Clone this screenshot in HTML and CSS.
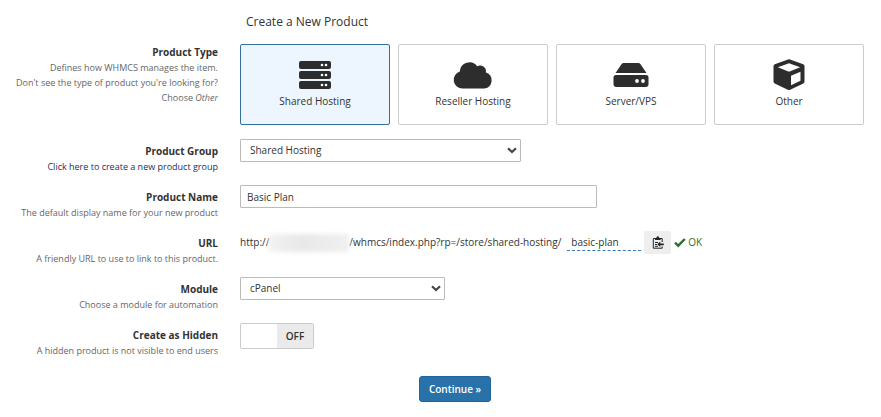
FILE: index.html
```html
<!DOCTYPE html>
<html lang="en">
<head>
<meta charset="utf-8">
<title>Create a New Product</title>
<link rel="stylesheet" href="styles.css">
</head>
<body>
<form class="product-form">
  <h1 class="title">Create a New Product</h1>

  <div class="row row-types">
    <div class="label">
      <strong id="type-label">Product Type</strong>
      <p>Defines how WHMCS manages the item.<br>Don't see the type of product you're looking for?<br>Choose <em>Other</em></p>
    </div>
    <div class="types" role="group" aria-labelledby="type-label">
      <button type="button" class="type selected" aria-pressed="true">
        <svg viewBox="0 0 36 30" aria-hidden="true">
          <rect x="2" y="1" width="32" height="8" rx="2"/><rect x="2" y="11" width="32" height="8" rx="2"/><rect x="2" y="21" width="32" height="8" rx="2"/>
          <g class="lights"><circle cx="25" cy="5" r="1.300"/><circle cx="29" cy="5" r="1.300"/><circle cx="25" cy="15" r="1.300"/><circle cx="29" cy="15" r="1.300"/><circle cx="25" cy="25" r="1.300"/><circle cx="29" cy="25" r="1.300"/></g>
        </svg>
        <span>Shared Hosting</span>
      </button>
      <button type="button" class="type" aria-pressed="false">
        <svg viewBox="0 0 40 30" class="wide" aria-hidden="true">
          <path d="M9.500 28.500a8.700 8.700 0 0 1-2.700-17A9.600 9.600 0 0 1 24.200 6.300a5.900 5.900 0 0 1 8.700 6.100A8.300 8.300 0 0 1 31.500 28.500z"/>
        </svg>
        <span>Reseller Hosting</span>
      </button>
      <button type="button" class="type" aria-pressed="false">
        <svg viewBox="0 0 36 30" aria-hidden="true">
          <path d="M2.500 13 8.500 4.200Q9.300 3 10.700 3H25.300Q26.700 3 27.500 4.200L33.500 13Z"/>
          <path d="M3 15H33Q35.500 15 35.500 17.500V24Q35.500 27 32.500 27H3.500Q.5 27 .5 24V17.500Q.5 15 3 15Z"/>
          <g class="lights"><circle cx="24" cy="21" r="1.900"/><circle cx="30" cy="21" r="1.900"/></g>
        </svg>
        <span>Server/VPS</span>
      </button>
      <button type="button" class="type" aria-pressed="false">
        <svg viewBox="0 0 36 30" aria-hidden="true">
          <path fill-rule="evenodd" d="M17 -.6Q18 -1 19 -.6L32.200 4.300Q33.500 4.800 33.500 6.200V21.500Q33.500 22.800 32.300 23.400L19.200 29.800Q18 30.300 16.800 29.800L3.700 23.400Q2.500 22.800 2.500 21.500V6.200Q2.500 4.800 3.800 4.300ZM18 3.200 6.800 7.300 18 11.800 29.200 7.300ZM20 15.700V25.300L29.500 20.700V11.800Z"/>
        </svg>
        <span>Other</span>
      </button>
    </div>
  </div>

  <div class="row">
    <div class="label">
      <label for="group">Product Group</label>
      <p><a href="#new-group">Click here to create a new product group</a></p>
    </div>
    <div class="field">
      <span class="select group-select">
        <select id="group"><option>Shared Hosting</option></select>
        <svg viewBox="0 0 10 7" aria-hidden="true"><path d="M1 1.300 5 5 9 1.300"/></svg>
      </span>
    </div>
  </div>

  <div class="row">
    <div class="label">
      <label for="name">Product Name</label>
      <p>The default display name for your new product</p>
    </div>
    <div class="field"><input class="name-input" id="name" type="text" value="Basic Plan"></div>
  </div>

  <div class="row">
    <div class="label">
      <label for="slug">URL</label>
      <p>A friendly URL to use to link to this product.</p>
    </div>
    <div class="field url">
      <span>http://</span><span class="redacted"></span><span>/whmcs/index.php?rp=/store/shared-hosting/</span>
      <input class="slug" id="slug" type="text" value="basic-plan">
      <button type="button" class="copy" aria-label="Copy URL">
        <svg viewBox="0 0 12 13" aria-hidden="true">
          <path class="line" d="M10.200 6V2.500H1.300V12.200H10.200V10.500M3 6.500H6M3 8.500H5M3 10.300H6"/>
          <path d="M3 4V2H4.300Q4.500.3 5.800.3T7.300 2H8.600V4ZM5.300 8.300 8.300 5.500V7.500H11.800V9.200H8.300V11Z"/>
        </svg>
      </button>
      <span class="ok"><svg viewBox="0 0 12 10" aria-hidden="true"><path d="M1 4.700 4.200 7.700 10.800 1"/></svg>OK</span>
    </div>
  </div>

  <div class="row">
    <div class="label">
      <label for="module">Module</label>
      <p>Choose a module for automation</p>
    </div>
    <div class="field">
      <span class="select module-select">
        <select id="module"><option>cPanel</option></select>
        <svg viewBox="0 0 10 7" aria-hidden="true"><path d="M1 1.300 5 5 9 1.300"/></svg>
      </span>
    </div>
  </div>

  <div class="row">
    <div class="label">
      <label for="hidden">Create as Hidden</label>
      <p>A hidden product is not visible to end users</p>
    </div>
    <div class="field">
      <button type="button" class="toggle" id="hidden" role="switch" aria-checked="false"><span>OFF</span></button>
    </div>
  </div>

  <div class="actions"><button type="submit" class="continue">Continue »</button></div>
</form>
</body>
</html>
```
FILE: styles.css
```css
* { box-sizing: border-box; }

body {
  margin: 0;
  background: #fff;
  color: #333;
  font: 10px/15px "Open Sans", sans-serif;
}

button, input, select { font: inherit; color: inherit; margin: 0; }
button { cursor: pointer; }
p { margin: 0; }

.product-form { padding: 14px 17px 16px 0; }

.title {
  margin: 0 0 14px 246px;
  font-size: 12px;
  line-height: 16px;
  font-weight: 400;
}

.row {
  display: grid;
  grid-template-columns: 218px minmax(0, 1fr);
  column-gap: 22px;
  min-height: 46px;
}

.label {
  padding-top: 4px;
  text-align: right;
  font-size: 9px;
  color: #666;
}

.label label, .label strong {
  display: block;
  font-size: 10px;
  line-height: 16px;
  font-weight: 700;
  color: #333;
}

.label a { color: #1a2e66; text-decoration: none; }

.row-types { min-height: 95px; }
.row-types .label { padding-top: 0; }

.types {
  display: grid;
  grid-template-columns: repeat(4, minmax(0, 1fr));
  gap: 8px;
  align-self: start;
}

.type {
  display: flex;
  flex-direction: column;
  align-items: center;
  gap: 4px;
  height: 81px;
  padding: 15px 4px;
  border: 1px solid #ccc;
  border-radius: 2px;
  background: #fff;
}

.type.selected { background: #edf5ff; border-color: #337099; }
.type svg { width: 36px; height: 30px; fill: #2d2d2d; overflow: visible; }
.type svg.wide { width: 40px; }
.type .lights { fill: #fff; }

.select { display: block; position: relative; height: 23px; }
.group-select { width: 281px; }
.module-select { width: 205px; }

.select select {
  display: block;
  width: 100%;
  height: 100%;
  padding: 0 20px 0 9px;
  appearance: none;
  border: 1px solid #bbb;
  border-radius: 1px;
  background: #fff;
}

.select svg {
  position: absolute;
  right: 4px;
  top: 8px;
  width: 10px;
  height: 7px;
  fill: none;
  stroke: #444;
  stroke-width: 2.2;
  pointer-events: none;
}

.name-input {
  display: block;
  width: 357px;
  height: 23px;
  padding: 0 6px;
  border: 1px solid #bbb;
  border-radius: 1px;
}

.url { display: flex; align-items: center; height: 23px; }

.redacted {
  width: 80px;
  height: 18px;
  background: linear-gradient(90deg, #f2f2f2, #e8e8e8 40%, #f0f0f0);
  filter: blur(2px);
}

.slug {
  width: 74px;
  height: 17px;
  margin-left: 6px;
  padding: 0 4px;
  border: 0;
  border-bottom: 1px dashed #337ab7;
  background: none;
}

.copy {
  display: grid;
  place-items: center;
  width: 27px;
  height: 23px;
  margin-left: 3px;
  padding: 0;
  border: 0;
  border-radius: 2px;
  background: #eee;
}

.copy svg { width: 12px; height: 13px; fill: #222; }
.copy .line { fill: none; stroke: #222; }

.ok { display: flex; align-items: center; gap: 2px; margin-left: 3px; color: #2f6f2f; }
.ok svg { width: 12px; height: 10px; fill: none; stroke: #2f6f2f; stroke-width: 2.4; }

.toggle {
  display: flex;
  justify-content: flex-end;
  width: 74px;
  height: 26px;
  padding: 0;
  border: 1px solid #ccc;
  border-radius: 2px;
  background: #fff;
  overflow: hidden;
}

.toggle span {
  width: 50%;
  line-height: 24px;
  text-align: center;
  font-weight: 600;
  background: #eaeaea;
}

.actions { padding: 7px 0 0 46px; text-align: center; }

.continue {
  height: 26px;
  padding: 0 9px;
  border: 1px solid #20669b;
  border-radius: 3px;
  background: #2872a9;
  color: #fff;
  font-weight: 600;
}
```
